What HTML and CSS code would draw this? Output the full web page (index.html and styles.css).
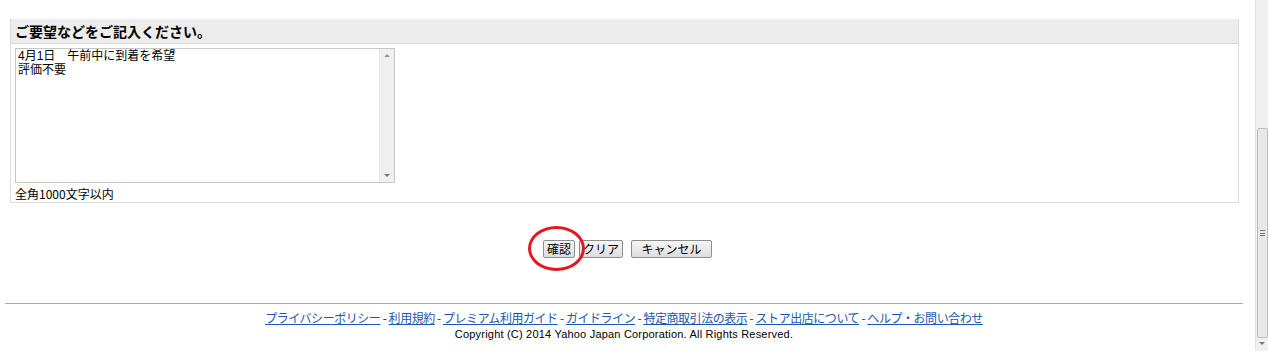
FILE: index.html
```html
<!DOCTYPE html>
<html lang="ja">
<head>
<meta charset="UTF-8" />
<title>ご要望入力</title>
<link rel="stylesheet" href="styles.css">
</head>
<body>

  <div class="page">

    <!-- ご要望 -->
    <section class="request">
      <h2 class="request-head">ご要望などをご記入ください。</h2>
      <div class="request-body">
        <div class="memo">
          <div class="memo-text">
            <p>4月1日　午前中に到着を希望</p>
            <p>評価不要</p>
          </div>
          <div class="memo-bar">
            <span class="arrow up"></span>
            <span class="arrow down"></span>
          </div>
        </div>
        <p class="note">全角1000文字以内</p>
      </div>
    </section>

    <!-- ボタン -->
    <div class="buttons">
      <span class="btn-wrap">
        <button class="btn">確認</button>
        <span class="mark"></span>
      </span>
      <button class="btn">クリア</button>
      <button class="btn btn-wide">キャンセル</button>
    </div>

    <footer>
      <p class="links">
        <a href="#">プライバシーポリシー</a> - <a href="#">利用規約</a> - <a href="#">プレミアム利用ガイド</a> - <a href="#">ガイドライン</a> - <a href="#">特定商取引法の表示</a> - <a href="#">ストア出店について</a> - <a href="#">ヘルプ・お問い合わせ</a>
      </p>
      <p class="copy">Copyright (C) 2014 Yahoo Japan Corporation. All Rights Reserved.</p>
    </footer>
  </div>

  <!-- ページのスクロールバー -->
  <div class="vscroll">
    <div class="thumb"><span class="grip"></span></div>
    <span class="arrow down"></span>
  </div>

</body>
</html>
```

FILE: styles.css
```css
  /* Reset */
  * {
    margin: 0; padding: 0; box-sizing: border-box;
  }

  body {
    font-family: "Noto Sans CJK JP", "Liberation Sans", sans-serif;
    font-size: 12px;
    color: #000;
    background: #fff;
    display: flex;
    height: 351px;
    overflow: hidden;
  }

  .page {
    width: 1255px;
    display: flex;
    flex-direction: column;
  }

  /* ご要望 */
  .request {
    margin: 19px 0 0 10px;
    width: 1229px;
    border: 1px solid #dcdcdc;
    border-top: none;
  }

  .request-head {
    background: #ececec;
    height: 25px;
    line-height: 24px;
    padding-left: 4px;
    font-size: 14px;
    font-weight: bold;
    border-bottom: 1px solid #dadada;
  }

  .request-body {
    padding: 4px 4px 0 4px;
  }

  .memo {
    width: 380px;
    height: 135px;
    border: 1px solid #c6c6c6;
    display: flex;
  }

  /* 行間を詰めるため欧文フォントを先に */
  .memo-text {
    flex: 1;
    padding: 0 2px;
    font-family: "Liberation Sans", "Noto Sans CJK JP", sans-serif;
    line-height: 14px;
    font-size: 12px;
  }

  .memo-bar {
    width: 15px;
    background: #f0f0f0;
    border-left: 1px solid #e6e6e6;
    display: flex;
    flex-direction: column;
    justify-content: space-between;
    align-items: center;
    padding: 5px 0;
  }

  .arrow {
    width: 0;
    height: 0;
    border-left: 3px solid transparent;
    border-right: 3px solid transparent;
  }

  .arrow.up {
    border-bottom: 3px solid #999;
  }

  .arrow.down {
    border-top: 3px solid #777;
  }

  .note {
    height: 19px;
    line-height: 17px;
    padding-top: 2px;
  }

  /* ボタン */
  .buttons {
    margin-top: 37px;
    display: flex;
    justify-content: center;
    gap: 4px;
  }

  .btn-wrap {
    position: relative;
    display: flex;
  }

  .btn {
    font-family: "Noto Sans CJK JP", sans-serif;
    font-size: 12px;
    height: 18px;
    line-height: 14px;
    padding: 0 3px;
    background: linear-gradient(#f6f6f6, #dddddd);
    border: 1px solid #8e8e8e;
    border-radius: 2px;
    color: #000;
  }

  .btn-wide {
    width: 81px;
    margin-left: 4px;
  }

  /* 赤丸 */
  .mark {
    position: absolute;
    left: -15px;
    top: -14px;
    width: 57px;
    height: 45px;
    border: 3px solid #e01a22;
    border-radius: 50%;
  }

  footer {
    margin: 45px 0 0 5px;
    width: 1238px;
    border-top: 1px solid #a9a9a9;
    text-align: center;
    padding-top: 6px;
  }

  .links {
    line-height: 15px;
    color: #333;
    letter-spacing: -0.45px;
  }

  .links a {
    color: #1c56b0;
    text-decoration: underline;
  }

  .copy {
    font-family: "Liberation Sans", sans-serif;
    font-size: 11px;
    line-height: 15px;
    margin-top: 2px;
    letter-spacing: 0.2px;
  }

  /* スクロールバー */
  .vscroll {
    width: 13px;
    background: #f0f0f0;
    border-left: 1px solid #e4e4e4;
    display: flex;
    flex-direction: column;
    align-items: center;
    padding-top: 128px;
  }

  .thumb {
    width: 11px;
    height: 210px;
    background: #e8e8e8;
    border: 1px solid #bdbdbd;
    border-radius: 2px;
    display: flex;
    align-items: center;
    justify-content: center;
  }

  .grip {
    width: 5px;
    height: 6px;
    border-top: 1px solid #777;
    border-bottom: 1px solid #777;
    background: linear-gradient(transparent 2px, #777 2px, #777 3px, transparent 3px);
  }

  .vscroll .arrow.down {
    margin-top: 4px;
  }
```
